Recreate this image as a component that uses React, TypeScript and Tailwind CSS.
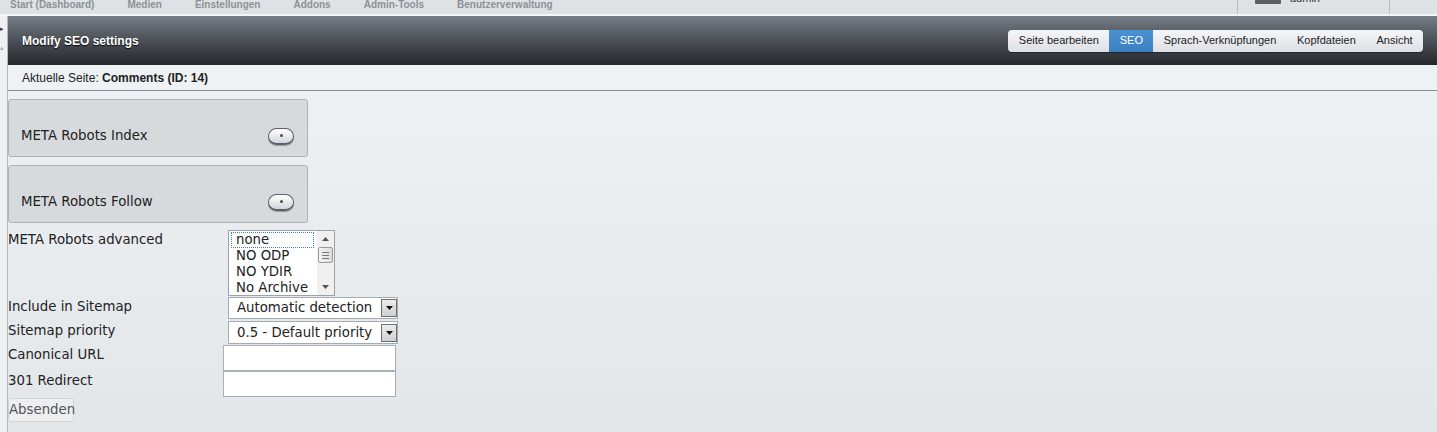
import { useState } from "react";

const navItems = [
  "Start (Dashboard)",
  "Medien",
  "Einstellungen",
  "Addons",
  "Admin-Tools",
  "Benutzerverwaltung",
];

const tabs = [
  "Seite bearbeiten",
  "SEO",
  "Sprach-Verknüpfungen",
  "Kopfdateien",
  "Ansicht",
];

const robotOptions = ["none", "NO ODP", "NO YDIR", "No Archive"];

function Toggle() {
  return (
    <div className="w-[26px] h-[17px] rounded-full border border-[#596067] border-b-2 bg-gradient-to-b from-white to-[#d3d7db] shadow-[0_1px_1px_rgba(0,0,0,0.3)] flex items-center justify-center">
      <div className="w-[3px] h-[3px] rounded-full bg-[#4a4f55]" />
    </div>
  );
}

function SwitchPanel({ label }: { label: string }) {
  return (
    <div className="w-[300px] h-[58px] rounded-[3px] border border-[#aeb3b8] bg-[#d7dadd] pt-[16px] pl-[12px] pr-[13px] flex items-center justify-between">
      <span>{label}</span>
      <Toggle />
    </div>
  );
}

function FakeSelect({ value, height }: { value: string; height: string }) {
  return (
    <div
      className={`ml-[5px] w-[170px] ${height} border border-[#a3abb3] bg-white flex items-center justify-between pl-[8px]`}
    >
      <span className="whitespace-nowrap">{value}</span>
      <div className="w-[16px] h-[18px] border border-[#6f6f6f] bg-gradient-to-b from-[#ececec] to-[#cfcfcf] flex items-center justify-center">
        <svg width="7" height="4" viewBox="0 0 7 4">
          <path d="M0 0h7L3.5 4z" fill="#111" />
        </svg>
      </div>
    </div>
  );
}

export default function App() {
  const [selected] = useState("none");

  return (
    <div className="w-[1437px] h-[432px] overflow-hidden flex flex-col bg-[#e8ebee] font-['DejaVu_Sans',sans-serif] text-[13.3px] text-[#222]">
      {/* Top navigation */}
      <div className="h-[16px] shrink-0 bg-[#dfe2e5] border-b-2 border-[#f3f5f7] flex overflow-hidden font-['Liberation_Sans',Arial,sans-serif]">
        <div className="flex gap-[33px] pl-[10px] -mt-[1px] text-[10px] leading-[12px] font-bold text-[#8c9197]">
          {navItems.map((item) => (
            <span key={item}>{item}</span>
          ))}
        </div>
        <div className="ml-auto flex h-full">
          <div className="w-[153px] h-full border-x border-[#b9bdc2] flex items-start pl-[17px]">
            <div className="w-[26px] h-[4px] bg-[#5b5f64] rounded-b-[1px]" />
            <span className="ml-[9px] -mt-[7px] text-[11px] leading-[11px] text-[#333]">
              admin
            </span>
          </div>
          <div className="w-[47px]" />
        </div>
      </div>

      <div className="flex flex-1 min-h-0">
        {/* Left strip */}
        <div className="w-[8px] shrink-0 bg-[#eef0f2] border-r border-[#b5b9be] relative">
          <span className="absolute left-0 top-[10px] text-[7px] leading-none text-[#333]">▸</span>
          <span className="absolute left-0 top-[29px] text-[7px] leading-none text-[#aaa]">▴</span>
        </div>

        <div className="flex-1 flex flex-col min-w-0">
          {/* Header */}
          <div className="h-[49px] shrink-0 bg-gradient-to-b from-[#767d86] to-[#25272b] flex items-center justify-between pl-[14px] pr-[14px] font-['Liberation_Sans',Arial,sans-serif]">
            <h1 className="text-[12px] font-bold text-white [text-shadow:0_1px_1px_rgba(0,0,0,0.9)]">
              Modify SEO settings
            </h1>
            <div className="flex h-[22px] rounded-[4px] overflow-hidden bg-gradient-to-b from-[#f5f6f8] to-[#dde0e4] shadow-[0_1px_1px_rgba(0,0,0,0.4)] text-[11px]">
              {tabs.map((tab) => (
                <div
                  key={tab}
                  className={
                    tab === "SEO"
                      ? "px-[10.4px] flex items-center bg-gradient-to-b from-[#4b92d1] to-[#3a7fbf] text-white"
                      : "px-[10.4px] flex items-center text-[#222]"
                  }
                >
                  {tab}
                </div>
              ))}
            </div>
          </div>

          {/* Breadcrumb */}
          <div className="h-[26px] shrink-0 bg-[#eef2f5] border-b border-[#858b92] flex items-center pl-[14px] font-['Liberation_Sans',Arial,sans-serif] text-[12px] text-[#222]">
            Aktuelle Seite:&nbsp;<span className="font-bold">Comments (ID: 14)</span>
          </div>

          {/* Content */}
          <div className="flex-1 bg-gradient-to-b from-[#eef1f4] to-[#e3e6e9] pt-[8px]">
            <div className="flex flex-col gap-[8px]">
              <SwitchPanel label="META Robots Index" />
              <SwitchPanel label="META Robots Follow" />
            </div>

            <div className="mt-[7px] flex flex-col">
              <div className="flex">
                <label className="w-[215px] pt-[2px] leading-[16px]">META Robots advanced</label>
                <div className="ml-[5px] w-[107px] h-[66px] border border-[#9aa2aa] bg-white flex">
                  <div className="flex-1 p-[1px] pl-[2px] pr-[3px]">
                    {robotOptions.map((opt) => (
                      <div
                        key={opt}
                        className={
                          opt === selected
                            ? "h-[16px] leading-[16px] pl-[5px] pr-[4px] outline outline-1 outline-dotted outline-[#3a7fd0] -outline-offset-1"
                            : "h-[16px] leading-[16px] pl-[5px] pr-[4px]"
                        }
                      >
                        {opt}
                      </div>
                    ))}
                  </div>
                  <div className="w-[17px] bg-[#f0f0f0] flex flex-col items-center">
                    <svg width="7" height="4" viewBox="0 0 7 4" className="mt-[6px]">
                      <path d="M3.5 0L7 4H0z" fill="#555" />
                    </svg>
                    <div className="mt-[6px] w-[15px] h-[16px] rounded-[2px] border border-[#9a9a9a] bg-gradient-to-r from-[#f4f4f4] to-[#dcdcdc] flex flex-col items-center justify-center gap-[2px]">
                      <div className="w-[7px] h-px bg-[#777]" />
                      <div className="w-[7px] h-px bg-[#777]" />
                      <div className="w-[7px] h-px bg-[#777]" />
                    </div>
                    <svg width="7" height="4" viewBox="0 0 7 4" className="mt-auto mb-[6px]">
                      <path d="M0 0h7L3.5 4z" fill="#555" />
                    </svg>
                  </div>
                </div>
              </div>

              <div className="flex mt-[1px]">
                <label className="w-[215px] pt-[2px] leading-[16px]">Include in Sitemap</label>
                <FakeSelect value="Automatic detection" height="h-[22px]" />
              </div>

              <div className="flex mt-[2px]">
                <label className="w-[215px] pt-[2px] leading-[16px]">Sitemap priority</label>
                <FakeSelect value="0.5 - Default priority" height="h-[23px]" />
              </div>

              <div className="flex mt-[1px]">
                <label className="w-[215px] pt-[2px] leading-[16px]">Canonical URL</label>
                <input className="w-[173px] h-[26px] border border-[#a9b0b7] bg-white outline-none" />
              </div>

              <div className="flex">
                <label className="w-[215px] pt-[2px] leading-[16px]">301 Redirect</label>
                <input className="w-[173px] h-[26px] border border-[#a9b0b7] bg-white outline-none" />
              </div>

              <div>
                <button className="mt-px h-[24px] px-0 w-[66px] rounded-[3px] border border-[#d1d4d7] bg-[#eceef0] text-[#555] text-[13.3px]">
                  Absenden
                </button>
              </div>
            </div>
          </div>
        </div>
      </div>
    </div>
  );
}
